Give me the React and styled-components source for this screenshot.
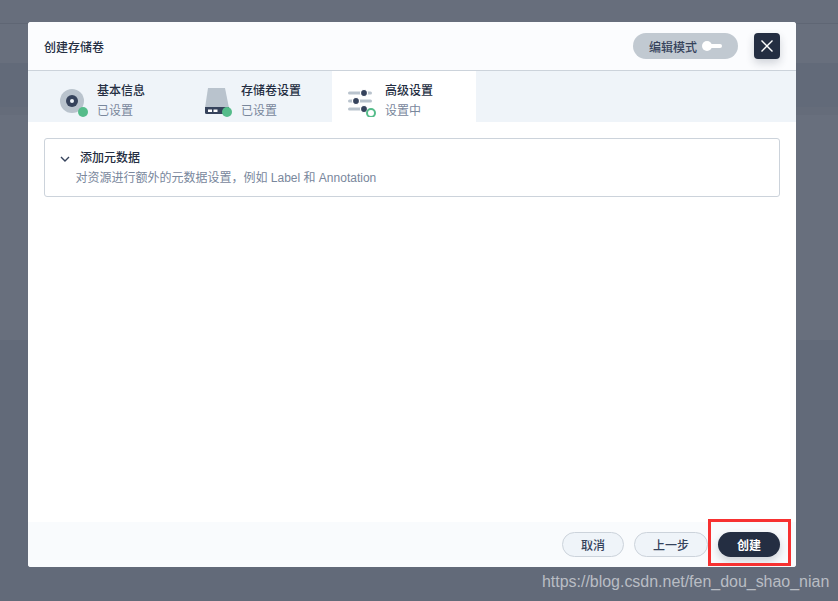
import React from 'react'
import styled, { createGlobalStyle } from 'styled-components'

const Global = createGlobalStyle`
html, body {
  margin: 0;
  padding: 0;
  height: 100%;
  overflow: hidden;
}
body {
  font-family: "Liberation Sans", "Noto Sans CJK SC", sans-serif;
}
`
const Page = styled.div`
position: relative;
width: 838px;
height: 601px;
overflow: hidden;
display: flex;
flex-direction: column;
background: #676e7c;
`
const Band = styled.div`
height: ${p => p.$h}px;
flex: ${p => p.$h ? 'none' : '1'};
background: ${p => p.$bg};
border-bottom: ${p => p.$line ? `1px solid ${p.$line}` : 'none'};
box-sizing: border-box;
`
const Modal = styled.div`
position: absolute;
left: 28px;
top: 22px;
width: 768px;
height: 545px;
display: flex;
flex-direction: column;
background: #fff;
border-radius: 3px;
overflow: visible;
`
const Header = styled.div`
height: 49px;
box-sizing: border-box;
display: flex;
align-items: center;
padding: 0 16px;
background: #fbfcfe;
border-bottom: 1px solid #ccd3db;
border-radius: 3px 3px 0 0;
`
const Title = styled.div`
flex: 1;
font-size: 12px;
color: #242e42;
font-weight: 500;
`
const ModeToggle = styled.div`
width: 105px;
height: 26px;
box-sizing: border-box;
border-radius: 13px;
background: #c1c9d1;
display: flex;
align-items: center;
gap: 5px;
padding-left: 16px;
font-size: 12px;
font-weight: 500;
color: #36435c;
margin-right: 16px;
`
const Knob = styled.span`
display: flex;
align-items: center;
`
const KnobDot = styled.span`
width: 10px;
height: 10px;
border-radius: 50%;
background: #fff;
`
const KnobBar = styled.span`
width: 11px;
height: 4px;
margin-left: -1px;
background: #fff;
border-radius: 0 2px 2px 0;
`
const CloseBtn = styled.button`
width: 26px;
height: 26px;
padding: 0;
border: 0;
border-radius: 4px;
background: #242e42;
display: flex;
align-items: center;
justify-content: center;
box-shadow: 0 4px 8px rgba(36, 46, 66, 0.2);
margin-right: 0;
`
const Tabs = styled.div`
height: 51px;
display: flex;
background: #eff4f9;
padding-left: 16px;
`
const Tab = styled.div`
width: 144px;
box-sizing: border-box;
display: flex;
align-items: flex-start;
padding: 10px 0 0 12px;
gap: 5px;
background: ${p => p.$active ? '#fff' : 'transparent'};
`
const IconBox = styled.div`
width: 36px;
height: 36px;
flex: none;
`
const TabText = styled.div`
display: flex;
flex-direction: column;
gap: 3px;
margin-top: 2px;
`
const TabName = styled.div`
font-size: 12px;
line-height: 17px;
font-weight: 500;
color: #242e42;
`
const TabState = styled.div`
font-size: 12px;
line-height: 17px;
color: #79879c;
`
const Body = styled.div`
flex: 1;
background: #fff;
padding: 16px;
`
const Card = styled.div`
height: 59px;
box-sizing: border-box;
border: 1px solid #ccd3db;
border-radius: 3px;
padding: 11px 15px 0 15px;
background: #fff;
`
const CardTitle = styled.div`
display: flex;
align-items: center;
gap: 10px;
font-size: 12px;
line-height: 17px;
font-weight: 500;
color: #242e42;
`
const CardDesc = styled.div`
font-size: 12px;
line-height: 17px;
margin-top: 3px;
padding-left: 15.5px;
color: #79879c;
`
const Footer = styled.div`
height: 45px;
box-sizing: border-box;
background: #f9fbfd;
display: flex;
justify-content: flex-end;
align-items: flex-start;
gap: 10px;
padding: 10px 16px 0 0;
border-radius: 0 0 3px 3px;
`
const Btn = styled.button`
height: 25px;
width: ${p => p.$w}px;
box-sizing: border-box;
padding: 0;
border-radius: 13px;
font-family: inherit;
font-size: 12px;
font-weight: ${p => p.$primary ? 600 : 500};
color: ${p => p.$primary ? '#fff' : '#36435c'};
background: ${p => p.$primary ? '#242e42' : '#eff4f9'};
border: ${p => p.$primary ? '0' : '1px solid #ccd3db'};
box-shadow: ${p => p.$primary ? '0 4px 8px rgba(36, 46, 66, 0.2)' : 'none'};
`
const RedFrame = styled.div`
position: absolute;
left: 708px;
top: 519px;
width: 83px;
height: 47px;
box-sizing: border-box;
border: 3px solid #f73131;
`
const Watermark = styled.div`
position: absolute;
left: 542px;
top: 572px;
font-size: 16px;
line-height: 20px;
letter-spacing: -0.025px;
color: #b9bdc4;
white-space: nowrap;
`

const DiskIcon = () => (
  <svg width="36" height="36" viewBox="0 0 36 36">
    <circle cx="16" cy="20" r="12" fill="#b9c3cd" />
    <circle cx="16" cy="20" r="6" fill="#36435c" />
    <circle cx="16" cy="20" r="2" fill="#eff4f9" />
    <circle cx="27" cy="31" r="5" fill="#55bc8a" />
  </svg>
)

const VolumeIcon = () => (
  <svg width="36" height="36" viewBox="0 0 36 36">
    <path d="M8 7h17l4 20H5z" fill="#b9c3cd" />
    <path d="M5 26h24v5.500a1.500 1.500 0 0 1-1.500 1.500h-21a1.500 1.500 0 0 1-1.500-1.500z" fill="#36435c" />
    <rect x="8" y="28.500" width="4" height="2.500" fill="#fff" />
    <rect x="13.500" y="28.500" width="4" height="2.500" fill="#fff" />
    <circle cx="27" cy="31" r="5" fill="#55bc8a" />
  </svg>
)

const SlidersIcon = () => (
  <svg width="36" height="36" viewBox="0 0 36 36">
    <rect x="4" y="10.500" width="24" height="3" rx="1.500" fill="#b9c3cd" />
    <rect x="4" y="18.500" width="24" height="3" rx="1.500" fill="#b9c3cd" />
    <rect x="4" y="26.500" width="20" height="3" rx="1.500" fill="#b9c3cd" />
    <circle cx="20" cy="12" r="3.500" fill="#36435c" stroke="#fff" strokeWidth="1.200" />
    <circle cx="12" cy="20" r="3.500" fill="#36435c" stroke="#fff" strokeWidth="1.200" />
    <circle cx="20" cy="28" r="3.500" fill="#36435c" stroke="#fff" strokeWidth="1.200" />
    <circle cx="27" cy="32" r="4" fill="#fff" stroke="#55bc8a" strokeWidth="2" />
  </svg>
)

const steps = [
  { name: '基本信息', state: '已设置', Icon: DiskIcon },
  { name: '存储卷设置', state: '已设置', Icon: VolumeIcon },
  { name: '高级设置', state: '设置中', Icon: SlidersIcon, active: true },
]

export default function App() {
  return (
    <>
      <Global />
      <Page>
        <Band $h={24} $bg="#676e7c" $line="#5f6674" />
        <Band $h={39} $bg="#686f7d" />
        <Band $h={44} $bg="#626a79" />
        <Band $h={8} $bg="#656c7a" />
        <Band $h={225} $bg="#686f7d" />
        <Band $bg="#626a79" />
        <Modal>
          <Header>
            <Title>创建存储卷</Title>
            <ModeToggle>
              编辑模式
              <Knob>
                <KnobDot />
                <KnobBar />
              </Knob>
            </ModeToggle>
            <CloseBtn>
              <svg width="14" height="14" viewBox="0 0 14 14">
                <path d="M1.500 1.500l11 11M12.500 1.500l-11 11" stroke="#fff" strokeWidth="1.400" fill="none" />
              </svg>
            </CloseBtn>
          </Header>
          <Tabs>
            {steps.map(({ name, state, Icon, active }) => (
              <Tab key={name} $active={active}>
                <IconBox>
                  <Icon />
                </IconBox>
                <TabText>
                  <TabName>{name}</TabName>
                  <TabState>{state}</TabState>
                </TabText>
              </Tab>
            ))}
          </Tabs>
          <Body>
            <Card>
              <CardTitle>
                <svg width="10" height="6" viewBox="0 0 10 6">
                  <path d="M1 1l4 4 4-4" stroke="#36435c" strokeWidth="1.400" fill="none" />
                </svg>
                添加元数据
              </CardTitle>
              <CardDesc>对资源进行额外的元数据设置，例如 Label 和 Annotation</CardDesc>
            </Card>
          </Body>
          <Footer>
            <Btn $w={62}>取消</Btn>
            <Btn $w={74}>上一步</Btn>
            <Btn $w={62} $primary>创建</Btn>
          </Footer>
        </Modal>
        <RedFrame />
        <Watermark>https://blog.csdn.net/fen_dou_shao_nian</Watermark>
      </Page>
    </>
  )
}
